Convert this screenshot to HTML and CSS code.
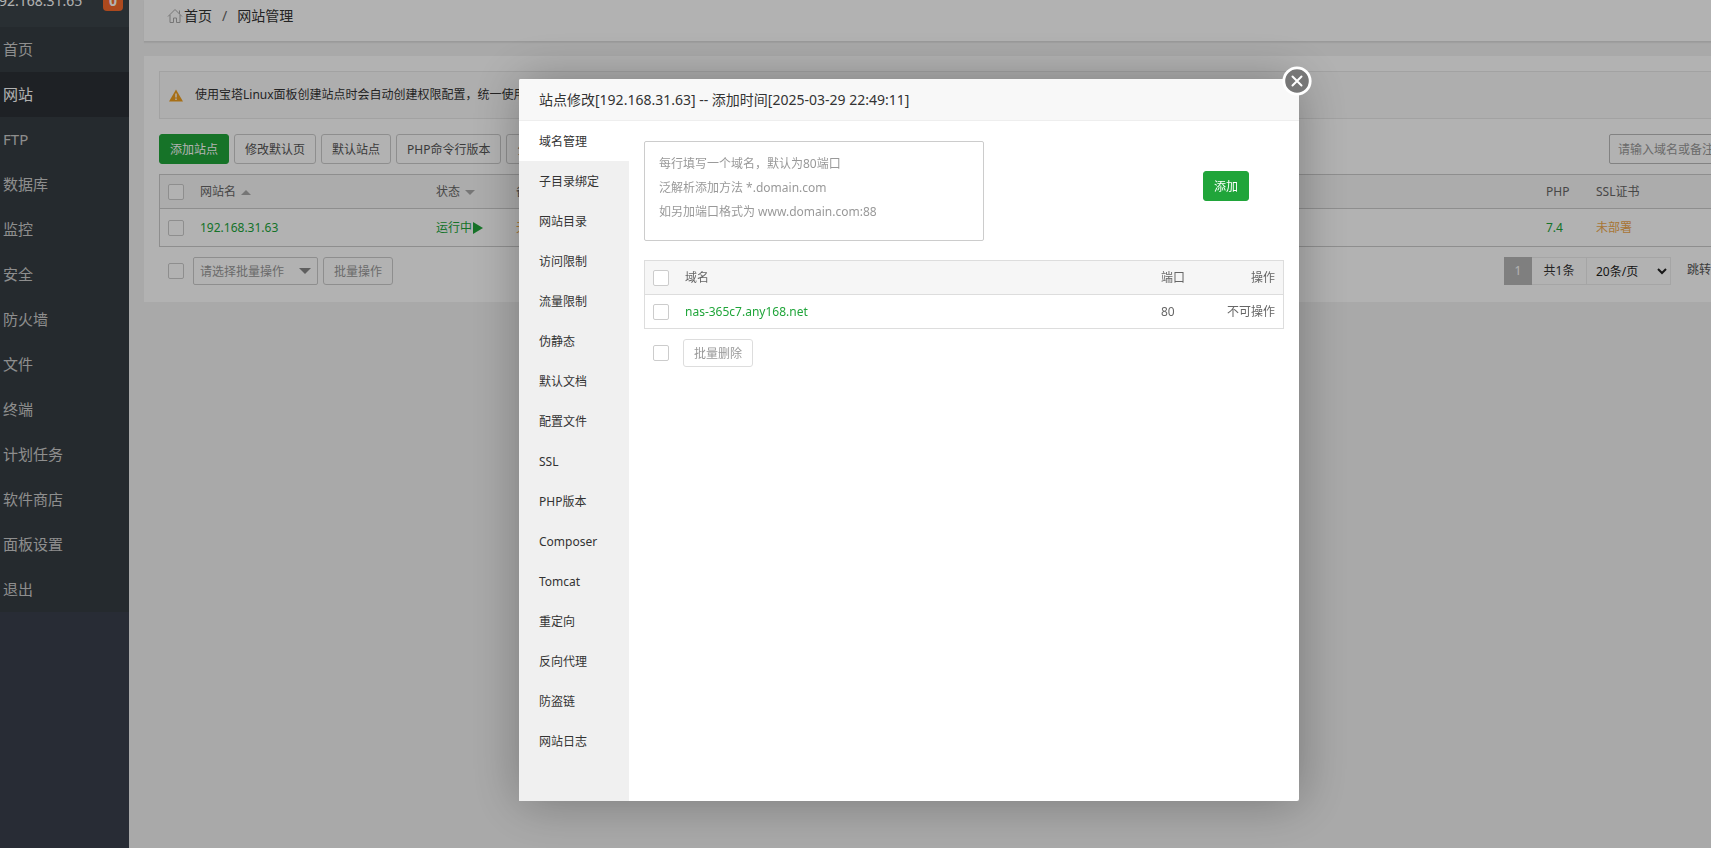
FILE: index.html
```
<!DOCTYPE html>
<html lang="zh-CN">
<head>
	<meta charset="UTF-8">
	<title>网站管理</title>
	<link rel="stylesheet" href="styles.css">
</head>
<body>
	<div class="wrap">
		<div class="sidebar">
			<div class="server"><span>192.168.31.65</span><b class="msg">0</b></div>
			<ul class="menu">
				<li><a href="#">首页</a></li>
				<li class="current"><a href="#">网站</a></li>
				<li><a href="#">FTP</a></li>
				<li><a href="#">数据库</a></li>
				<li><a href="#">监控</a></li>
				<li><a href="#">安全</a></li>
				<li><a href="#">防火墙</a></li>
				<li><a href="#">文件</a></li>
				<li><a href="#">终端</a></li>
				<li><a href="#">计划任务</a></li>
				<li><a href="#">软件商店</a></li>
				<li><a href="#">面板设置</a></li>
				<li><a href="#">退出</a></li>
			</ul>
		</div>
		<div class="main">
			<div class="crumb">
				<svg class="home" width="16" height="16" viewBox="0 0 16 16" fill="none" stroke="#aaa" stroke-width="1"><path d="M1 8.500L8 1.500l7 7M3 7v7.500h3.500v-4.500h3v4.500H13V7M12.500 6V2.500"/></svg>
				<a href="#">首页</a><i>/</i><span>网站管理</span>
			</div>
			<div class="card">
				<div class="tips">
					<svg width="14" height="13" viewBox="0 0 14 13"><path d="M7 0.500L14 12.500H0z" fill="#f0a020"/><path d="M6.300 4.500h1.400v4H6.300zM6.300 9.500h1.400v1.500H6.300z" fill="#fff"/></svg>
					<span>使用宝塔Linux面板创建站点时会自动创建权限配置，统一使用www用户。</span>
				</div>
				<div class="tools">
					<button class="btn green">添加站点</button>
					<button class="btn">修改默认页</button>
					<button class="btn">默认站点</button>
					<button class="btn">PHP命令行版本</button>
					<button class="btn">分类管理</button>
					<input class="search" type="text" placeholder="请输入域名或备注" aria-label="搜索网站">
				</div>
				<table class="table sites">
					<colgroup><col class="c-check"><col class="c-name"><col class="c-state"><col><col class="c-php"><col class="c-ssl"></colgroup>
					<thead>
						<tr><th><input type="checkbox" aria-label="全选网站"></th><th>网站名<i class="up"></i></th><th>状态<i class="down"></i></th><th>备份</th><th>PHP</th><th>SSL证书</th></tr>
					</thead>
					<tbody>
						<tr><td><input type="checkbox" aria-label="选择 192.168.31.63"></td><td><a href="#">192.168.31.63</a></td><td><a href="#" class="run">运行中<i class="play"></i></a></td><td><a href="#" class="orange">无备份</a></td><td><a href="#">7.4</a></td><td><a href="#" class="orange">未部署</a></td></tr>
					</tbody>
				</table>
				<div class="foot">
					<input type="checkbox" aria-label="全选">
					<div class="batch"><select aria-label="批量操作"><option>请选择批量操作</option></select></div>
					<button class="btn small">批量操作</button>
					<div class="page">
						<span class="num">1</span>
						<span class="total">共1条</span>
						<select aria-label="每页条数"><option>20条/页</option></select>
						<span class="jump">跳转到</span>
					</div>
				</div>
			</div>
		</div>
	</div>
	<div class="shade"></div>
	<div class="layer" role="dialog" aria-labelledby="layer-title">
		<div class="layer-title" id="layer-title">站点修改[192.168.31.63] -- 添加时间[2025-03-29 22:49:11]</div>
		<button class="close" aria-label="关闭"><svg width="30" height="30" viewBox="0 0 30 30"><circle cx="15" cy="15" r="13.200" fill="#777" stroke="#fff" stroke-width="2.800"/><path d="M10.500 10.500l9 9M19.500 10.500l-9 9" stroke="#fff" stroke-width="2" stroke-linecap="round"/></svg></button>
		<div class="layer-body">
			<ul class="tab">
				<li class="on"><a href="#">域名管理</a></li>
				<li><a href="#">子目录绑定</a></li>
				<li><a href="#">网站目录</a></li>
				<li><a href="#">访问限制</a></li>
				<li><a href="#">流量限制</a></li>
				<li><a href="#">伪静态</a></li>
				<li><a href="#">默认文档</a></li>
				<li><a href="#">配置文件</a></li>
				<li><a href="#">SSL</a></li>
				<li><a href="#">PHP版本</a></li>
				<li><a href="#">Composer</a></li>
				<li><a href="#">Tomcat</a></li>
				<li><a href="#">重定向</a></li>
				<li><a href="#">反向代理</a></li>
				<li><a href="#">防盗链</a></li>
				<li><a href="#">网站日志</a></li>
			</ul>
			<div class="con">
				<div class="add">
					<textarea aria-label="域名" placeholder="每行填写一个域名，默认为80端口&#10;泛解析添加方法 *.domain.com&#10;如另加端口格式为 www.domain.com:88"></textarea>
					<button class="btn green">添加</button>
				</div>
				<table class="table domains">
					<colgroup><col class="c-check"><col><col class="c-port"><col class="c-do"></colgroup>
					<thead>
						<tr><th><input type="checkbox" aria-label="全选域名"></th><th>域名</th><th>端口</th><th class="right">操作</th></tr>
					</thead>
					<tbody>
						<tr><td><input type="checkbox" aria-label="选择 nas-365c7.any168.net"></td><td><a href="#">nas-365c7.any168.net</a></td><td>80</td><td class="right">不可操作</td></tr>
					</tbody>
				</table>
				<div class="foot">
					<input type="checkbox" aria-label="全选">
					<button class="btn small del">批量删除</button>
				</div>
			</div>
		</div>
	</div>
</body>
</html>
```
FILE: styles.css
```
*{margin:0;padding:0;box-sizing:border-box;list-style:none;}
html,body{height:100%;overflow:hidden;}
body,button,input,select,textarea{font-family:"Noto Sans","Noto Sans CJK SC",sans-serif;font-size:12px;color:#666;}
body{background:#f2f2f2;line-height:20px;}
a{text-decoration:none;color:#20a53a;}
i{font-style:normal;}
.wrap{display:flex;height:100%;overflow:hidden;}

/*左侧菜单*/
.sidebar{flex:none;width:180px;margin-left:-51px;background:#3a404d;}
.server{display:flex;align-items:flex-start;height:27px;padding-left:42px;background:#3c444a;color:#fff;font-size:14px;}
.server span{flex:none;width:112px;margin-top:-9px;}
.msg{width:20px;height:20px;margin-top:-9px;border-radius:4px;background:#f7692c;text-align:center;}
.menu{background:#363d42;}
.menu a{display:block;height:45px;padding-left:54px;line-height:45px;font-size:15px;color:#ccc;}
.menu .current a{background:#2c3035;color:#fff;}

/*右侧内容*/
.main{flex:1;min-width:0;padding-left:15px;}
.crumb{display:flex;align-items:center;height:42px;margin-bottom:14px;padding:0 0 10px 23px;background:#fff;border-bottom:1px solid #ddd;box-shadow:0 1px 1px #e4e4e4;font-size:14px;color:#333;}
.crumb a{color:#333;}
.crumb i{margin:0 10px;color:#666;}
.home{margin-right:1px;}
.card{margin-right:-150px;padding:15px 15px 17px;background:#fff;}
.tips{display:flex;align-items:center;gap:12px;height:48px;margin-bottom:15px;padding-left:9px;background:#fafafa;border:1px solid #e8e8e8;color:#333;}
.tools{display:flex;gap:5px;margin-bottom:10px;}
.btn{height:30px;padding:0 10px;background:#fff;border:1px solid #ccc;border-radius:3px;color:#555;white-space:nowrap;}
.green{background:#20a53a;border-color:#20a53a;color:#fff;}
.small{height:28px;color:#999;}
.search{width:237px;height:30px;margin-left:auto;padding-left:8px;background:#fff;border:1px solid #bbb;border-radius:2px;}
.search::placeholder{color:#999;}

.table{width:100%;table-layout:fixed;border-collapse:separate;border-spacing:0;border:1px solid #ddd;}
.table th{height:34px;padding:0 8px;background:#f6f6f6;border-bottom:1px solid #ddd;font-weight:normal;text-align:left;}
.table td{height:33px;padding:0 8px;text-align:left;}
.table .right{text-align:right;}
.sites,.sites th{border-color:#ccc;}
.sites td{height:37px;}
.c-check{width:32px;}
.c-name{width:236px;}
.c-state{width:80px;}
.c-php{width:50px;}
.c-ssl{width:257px;}
.c-port{width:60px;}
.c-do{width:70px;}
.orange{color:#f0a94e;}
.up,.down{display:inline-block;margin-left:5px;border:5px solid transparent;vertical-align:middle;}
.up{border-top:0;border-bottom-color:#aaa;}
.down{border-bottom:0;border-top-color:#aaa;}
.play{display:inline-block;margin-left:1px;border:6px solid transparent;border-left:10px solid #20a53a;border-right:0;vertical-align:middle;}

input[type=checkbox]{display:block;flex:none;appearance:none;width:16px;height:16px;background:#fff;border:1px solid #ccc;border-radius:2px;}
.foot{display:flex;align-items:center;gap:5px;margin-top:10px;padding-left:9px;}
.foot input{margin-right:4px;}
.batch{position:relative;width:125px;height:28px;}
.batch select{width:100%;height:28px;padding-left:6px;appearance:none;background:#fff;border:1px solid #ccc;border-radius:2px;color:#999;}
.batch:after{content:"";position:absolute;right:7px;top:11px;border:6px solid transparent;border-top-color:#888;border-bottom:0;pointer-events:none;}
.page{display:flex;margin-left:auto;width:342px;height:28px;line-height:28px;color:#333;}
.num{width:28px;background:#b7b7b7;color:#fff;text-align:center;}
.total{width:55px;border:1px solid #ececec;border-left:0;line-height:26px;text-align:center;}
.page select{width:84px;padding-left:5px;background:#fff;border:1px solid #ececec;border-left:0;color:#222;}
.jump{margin-left:16px;line-height:26px;color:#555;}

/*弹窗*/
.shade{position:fixed;top:0;right:0;bottom:0;left:0;background:rgba(0,0,0,0.3);}
.layer{position:fixed;top:79px;left:519px;width:780px;background:#fff;border-radius:2px;box-shadow:1px 1px 50px rgba(0,0,0,0.3);}
.layer-title{height:42px;padding-left:20px;line-height:41px;background:#f8f8f8;border-bottom:1px solid #eee;border-radius:2px 2px 0 0;font-size:14px;color:#333;}
.close{position:absolute;top:-13px;right:-13px;width:30px;height:30px;background:none;border:0;cursor:pointer;}
.close svg{display:block;}
.layer-body{display:flex;}
.tab{flex:none;width:110px;padding-bottom:40px;background:#f0f0f0;}
.tab a{display:block;height:40px;padding-left:20px;line-height:42px;color:#333;}
.tab .on{background:#fff;}
.con{flex:1;padding:20px 15px;}
.add{display:flex;align-items:flex-start;justify-content:space-between;margin-bottom:19px;padding-right:35px;}
.add textarea{display:block;width:340px;height:100px;padding:10px 14px;border:1px solid #ccc;border-radius:2px;line-height:24px;resize:none;}
.add textarea::placeholder{color:#999;}
.add .btn{margin-top:30px;}
.con .foot input{margin-right:9px;}
.del{border-color:#ddd;}
```
